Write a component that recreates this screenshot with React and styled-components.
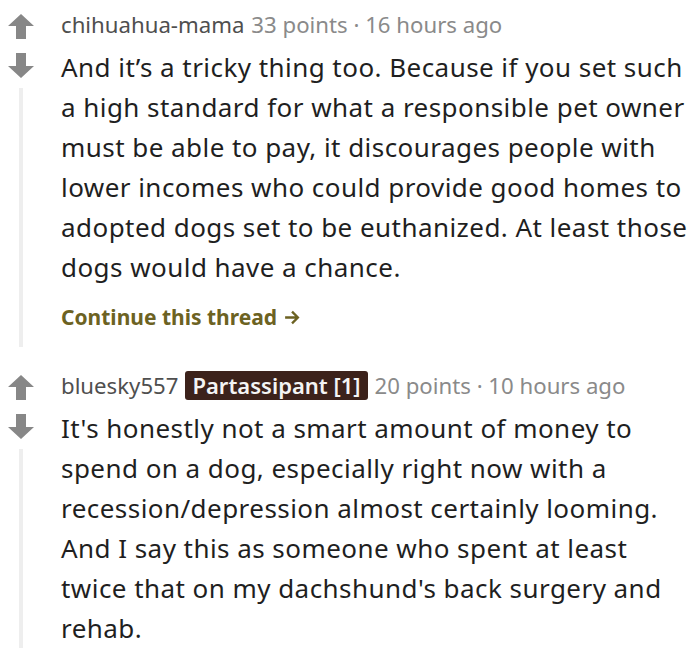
import React from 'react';
import styled, { createGlobalStyle } from 'styled-components';

const Global = createGlobalStyle`
	html, body {
		margin: 0;
		padding: 0;
		background: #fff;
	}
`;

const Page = styled.div`
	width: 700px;
	height: 654px;
	overflow: hidden;
	background: #fff;
	padding-top: 14px;
	box-sizing: border-box;
`;

const Comment = styled.div`
	display: flex;
	align-items: stretch;
	margin-bottom: ${ props => props.gap || 0 }px;
`;

const Rail = styled.div`
	flex: none;
	width: 52px;
	padding-left: 8px;
	padding-right: 18px;
	display: flex;
	flex-direction: column;
	align-items: center;
	box-sizing: border-box;
`;

const Vote = styled.svg`
	display: block;
	width: 26px;
	height: 25px;
	margin-bottom: ${ props => props.spacing || 0 }px;
`;

const Thread = styled.div`
	flex: 1;
	width: 4px;
	background: #eeeeee;
	margin-top: 10px;
`;

const Body = styled.div`
	flex: 1;
	padding-left: 9px;
	margin-top: -4px;
`;

const Meta = styled.div`
	display: flex;
	align-items: center;
	gap: 7px;
	font-family: "Noto Sans", sans-serif;
	font-size: 22.2px;
	line-height: 29px;
	color: #8a8a8a;
	white-space: nowrap;
`;

const Author = styled.span`
	color: #4f4f4f;
`;

const Flair = styled.span`
	background: #3c221b;
	color: #f4f4f4;
	border-radius: 3px;
	padding: 0 7px;
	font-weight: 600;
	line-height: 29px;
	font-size: 22px;
`;

const Text = styled.p`
	margin: 8px 0 0;
	font-family: "Noto Sans", sans-serif;
	font-size: 26px;
	letter-spacing: 0.45px;
	line-height: 40px;
	color: #1f1f1f;
`;

const More = styled.a`
	display: inline-flex;
	align-items: center;
	gap: 6px;
	margin-top: 16px;
	font-family: "Noto Sans", sans-serif;
	font-weight: 700;
	font-size: 21px;
	color: #6c6222;
	text-decoration: none;
	padding-bottom: 16px;
`;

function Up( { spacing } ) {
	return (
		<Vote viewBox="0 0 26 25" spacing={ spacing }>
			<path d="M13 0 L26 12 L18 12 L18 25 L8 25 L8 12 L0 12 Z" fill="#878787" />
		</Vote>
	);
}

function Down() {
	return (
		<Vote viewBox="0 0 26 25">
			<path d="M8 0 L18 0 L18 13 L26 13 L13 25 L0 13 L8 13 Z" fill="#878787" />
		</Vote>
	);
}

function Arrow() {
	return (
		<svg width="17" height="17" viewBox="0 0 16 16">
			<path d="M2 8 H14 M8.5 2.5 L14 8 L8.5 13.5" stroke="#6c6222" strokeWidth="2.2" fill="none" />
		</svg>
	);
}

const comments = [
	{
		author: 'chihuahua-mama',
		points: '33 points',
		time: '16 hours ago',
		text: 'And it’s a tricky thing too. Because if you set such a high standard for what a responsible pet owner must be able to pay, it discourages people with lower incomes who could provide good homes to adopted dogs set to be euthanized. At least those dogs would have a chance.',
		more: true,
	},
	{
		author: 'bluesky557',
		flair: 'Partassipant [1]',
		points: '20 points',
		time: '10 hours ago',
		text: 'It\'s honestly not a smart amount of money to spend on a dog, especially right now with a recession/depression almost certainly looming. And I say this as someone who spent at least twice that on my dachshund\'s back surgery and rehab.',
	},
];

export default function App() {
	return (
		<Page>
			<Global />
			{ comments.map( ( c, i ) => (
				<Comment key={ c.author } gap={ i === 0 ? 28 : 0 }>
					<Rail>
						<Up spacing={ 14 } />
						<Down />
						<Thread />
					</Rail>
					<Body>
						<Meta>
							<Author>{ c.author }</Author>
							{ c.flair && <Flair>{ c.flair }</Flair> }
							<span>{ c.points } · { c.time }</span>
						</Meta>
						<Text>{ c.text }</Text>
						{ c.more && <More href="#">Continue this thread<Arrow /></More> }
					</Body>
				</Comment>
			) ) }
		</Page>
	);
}
